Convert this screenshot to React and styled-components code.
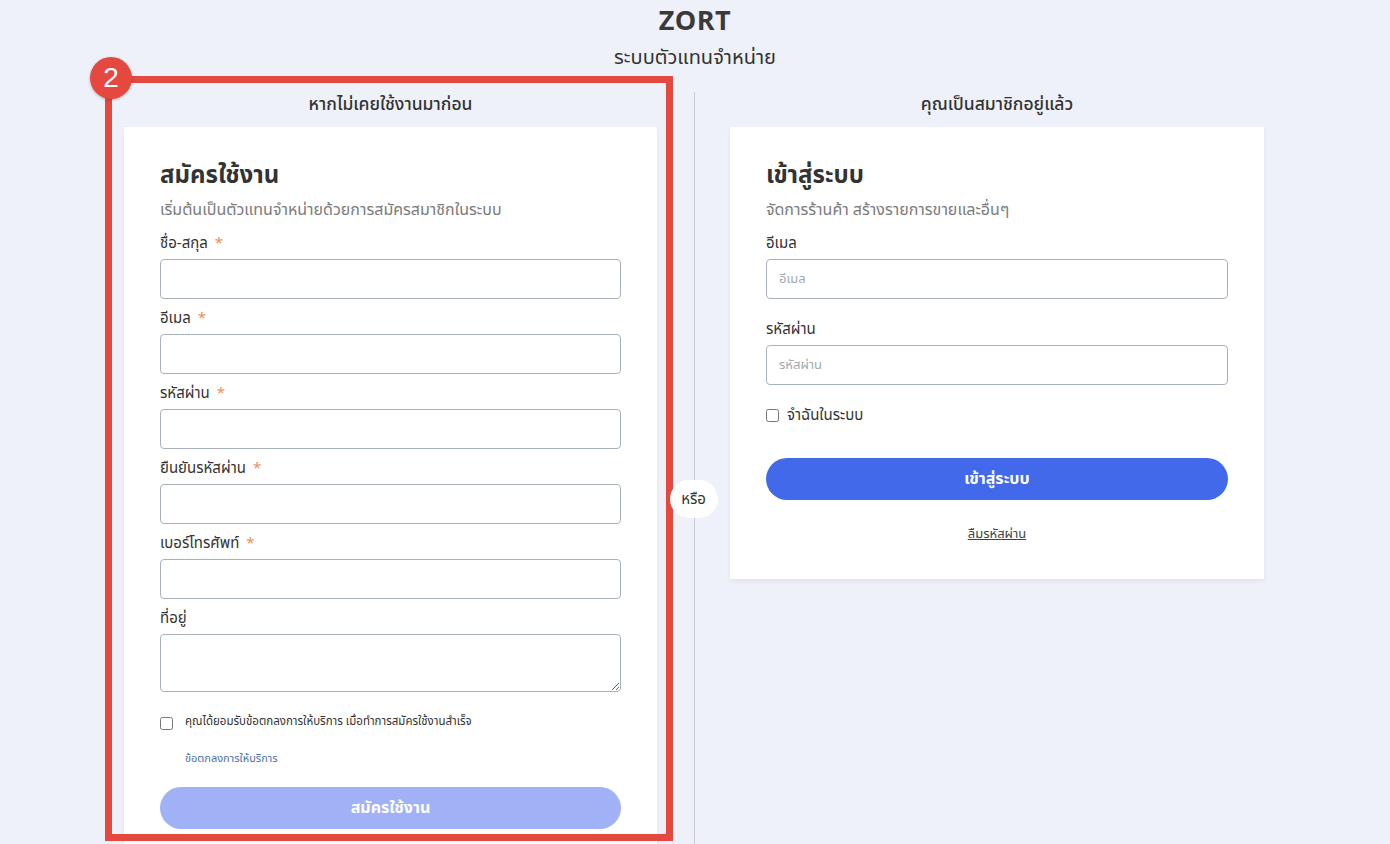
import React from "react";
import styled, { createGlobalStyle } from "styled-components";

const GlobalStyle = createGlobalStyle`
  html, body {
    margin: 0;
    padding: 0;
    background: #eef1f9;
    font-family: "Noto Sans Thai", "Noto Sans", "DejaVu Sans", sans-serif;
    color: #333;
    overflow: hidden;
    height: 844px;
  }
`;

const Page = styled.div`
  display: flex;
  flex-direction: column;
  align-items: center;
  height: 844px;
`;

const Brand = styled.h1`
  margin: 5px 0 0;
  font-size: 27px;
  line-height: 34px;
  font-weight: 700;
  color: #3a3a3a;
  letter-spacing: 0.5px;
`;

const Tagline = styled.div`
  margin-top: 5px;
  font-size: 20px;
  line-height: 28px;
  color: #333;
`;

const Columns = styled.div`
  margin-top: 20px;
  display: grid;
  grid-template-columns: 533px 73px 534px;
  flex: 1;
  margin-left: -2px;
`;

const Column = styled.section`
  position: relative;
  display: flex;
  flex-direction: column;
`;

const ColumnTitle = styled.div`
  height: 35px;
  padding-top: 1px;
  box-sizing: border-box;
  text-align: center;
  font-size: 17.5px;
  line-height: 24px;
  font-weight: 500;
  color: #333;
`;

const Card = styled.div`
  background: #fff;
  padding: 30px 36px 0;
  box-shadow: 0 2px 4px rgba(60, 70, 110, 0.08);
  height: ${(p) => (p.$open ? "auto" : "452px")};
  flex: ${(p) => (p.$open ? 1 : "none")};
  box-sizing: border-box;
`;

const CardTitle = styled.h2`
  margin: 0;
  font-size: 24px;
  line-height: 38px;
  font-weight: 700;
  color: #333;
`;

const CardSub = styled.p`
  margin: 0 0 6px;
  font-size: 16px;
  line-height: 30px;
  color: #7b7b7b;
`;

const Field = styled.div`
  display: flex;
  flex-direction: column;
  margin-bottom: ${(p) => p.$gap || 7}px;
`;

const Label = styled.label`
  font-size: 15px;
  line-height: 25px;
  padding-bottom: 3px;
  color: #333;
`;

const Star = styled.span`
  color: #ee8f55;
  margin-left: 7px;
`;

const Input = styled.input`
  box-sizing: border-box;
  height: 40px;
  width: 100%;
  border: 1px solid #a9b1bf;
  border-radius: 4px;
  padding: 0 12px;
  font: inherit;
  font-size: 13px;
  color: #333;
  &::placeholder {
    color: #a4a8ae;
  }
`;

const TextArea = styled.textarea`
  box-sizing: border-box;
  height: 58px;
  width: 100%;
  border: 1px solid #a9b1bf;
  border-radius: 4px;
  padding: 8px 12px;
  font: inherit;
`;

const CheckRow = styled.label`
  display: flex;
  align-items: center;
  gap: ${(p) => (p.$small ? 12 : 8)}px;
  font-size: ${(p) => (p.$small ? 11.5 : 15)}px;
  color: #333;
  input {
    margin: 0;
    width: 13px;
    height: 13px;
    transform: translateY(${(p) => (p.$small ? 2 : 0)}px);
  }
`;

const TermsLink = styled.a`
  display: block;
  margin: 20px 0 0 25px;
  font-size: 11px;
  color: #4a6fa5;
  text-decoration: none;
`;

const Button = styled.button`
  width: 100%;
  height: 42px;
  border: none;
  border-radius: 21px;
  background: ${(p) => (p.$disabled ? "#a0b2f5" : "#4169e9")};
  color: #fff;
  font: inherit;
  font-size: 16px;
  font-weight: 700;
  margin-top: ${(p) => p.$top || 0}px;
`;

const Forgot = styled.a`
  display: block;
  text-align: center;
  margin-top: 24px;
  font-size: 13px;
  color: #444;
  text-decoration: underline;
`;

const Divider = styled.div`
  position: relative;
  display: flex;
  justify-content: center;
  align-items: flex-start;
  &::before {
    content: "";
    position: absolute;
    top: 0;
    bottom: 0;
    left: 50%;
    width: 1px;
    background: #c8cbd2;
  }
`;

const OrPill = styled.div`
  position: relative;
  margin-top: 388px;
  width: 48px;
  height: 38px;
  border-radius: 19px;
  background: #fff;
  display: flex;
  align-items: center;
  justify-content: center;
  font-size: 15px;
  color: #333;
`;

const Highlight = styled.div`
  position: absolute;
  left: -19px;
  right: -16px;
  top: -16px;
  bottom: 3px;
  border: 7px solid #e5483f;
  pointer-events: none;
`;

const Badge = styled.div`
  position: absolute;
  left: -34px;
  top: -35px;
  width: 42px;
  height: 42px;
  border-radius: 50%;
  background: #e5483f;
  color: #fff;
  font-family: "Liberation Sans", Arial, sans-serif;
  font-size: 28px;
  display: flex;
  align-items: center;
  justify-content: center;
  box-shadow: 0 1px 3px rgba(0, 0, 0, 0.25);
`;

const signupFields = [
  { label: "ชื่อ-สกุล", req: true },
  { label: "อีเมล", req: true, type: "email" },
  { label: "รหัสผ่าน", req: true, type: "password" },
  { label: "ยืนยันรหัสผ่าน", req: true, type: "password" },
  { label: "เบอร์โทรศัพท์", req: true },
];

export default function App() {
  return (
    <Page>
      <GlobalStyle />
      <Brand>ZORT</Brand>
      <Tagline>ระบบตัวแทนจำหน่าย</Tagline>
      <Columns>
        <Column>
          <ColumnTitle>หากไม่เคยใช้งานมาก่อน</ColumnTitle>
          <Card $open>
            <CardTitle>สมัครใช้งาน</CardTitle>
            <CardSub>เริ่มต้นเป็นตัวแทนจำหน่ายด้วยการสมัครสมาชิกในระบบ</CardSub>
            {signupFields.map((f) => (
              <Field key={f.label}>
                <Label>
                  {f.label}
                  {f.req && <Star>*</Star>}
                </Label>
                <Input type={f.type || "text"} />
              </Field>
            ))}
            <Field $gap={21}>
              <Label>ที่อยู่</Label>
              <TextArea />
            </Field>
            <CheckRow $small>
              <input type="checkbox" />
              คุณได้ยอมรับข้อตกลงการให้บริการ เมื่อทำการสมัครใช้งานสำเร็จ
            </CheckRow>
            <TermsLink href="#">ข้อตกลงการให้บริการ</TermsLink>
            <Button $disabled $top={20}>สมัครใช้งาน</Button>
          </Card>
          <Highlight />
          <Badge>2</Badge>
        </Column>

        <Divider>
          <OrPill>หรือ</OrPill>
        </Divider>

        <Column>
          <ColumnTitle>คุณเป็นสมาชิกอยู่แล้ว</ColumnTitle>
          <Card>
            <CardTitle>เข้าสู่ระบบ</CardTitle>
            <CardSub>จัดการร้านค้า สร้างรายการขายและอื่นๆ</CardSub>
            <Field $gap={18}>
              <Label>อีเมล</Label>
              <Input placeholder="อีเมล" />
            </Field>
            <Field $gap={19}>
              <Label>รหัสผ่าน</Label>
              <Input type="password" placeholder="รหัสผ่าน" />
            </Field>
            <CheckRow>
              <input type="checkbox" />
              จำฉันในระบบ
            </CheckRow>
            <Button $top={31}>เข้าสู่ระบบ</Button>
            <Forgot href="#">ลืมรหัสผ่าน</Forgot>
          </Card>
        </Column>
      </Columns>
    </Page>
  );
}
